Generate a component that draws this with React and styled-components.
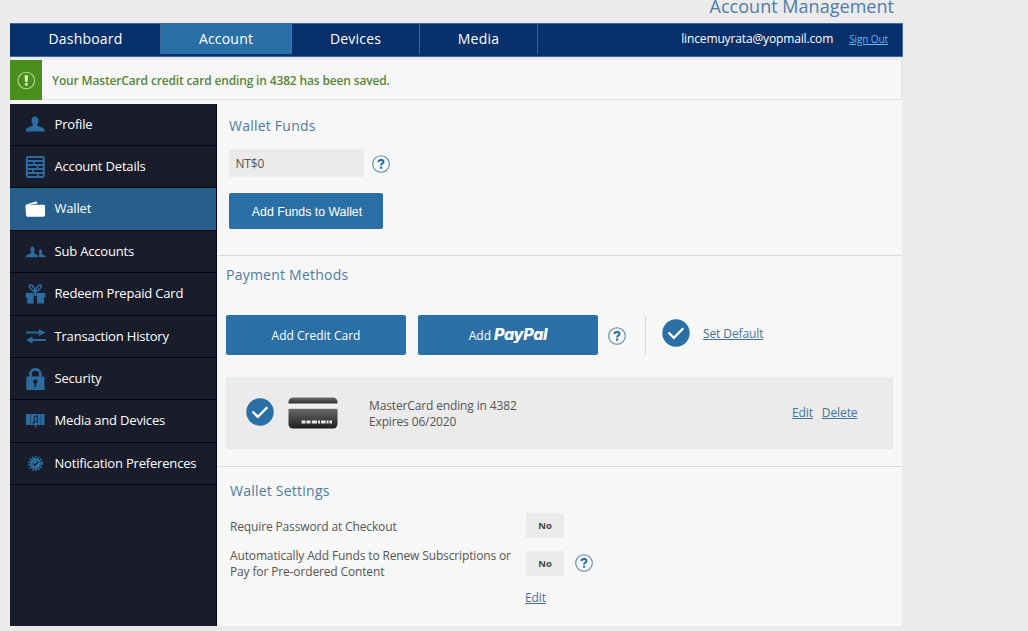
import styled, { createGlobalStyle, css } from 'styled-components';

const GlobalStyle = createGlobalStyle`
  * {
    box-sizing: border-box;
  }
  body {
    margin: 0;
    background: #ebebeb;
    font-family: 'Open Sans', 'Liberation Sans', sans-serif;
    font-size: 12px;
    color: #555;
  }
  h1, h2, p, ul {
    margin: 0;
    padding: 0;
    font-weight: 400;
  }
`;

const Page = styled.div`
  width: 1028px;
  height: 631px;
  padding-left: 10px;
  overflow: hidden;
`;

const PageTitle = styled.h1`
  width: 884px;
  height: 23px;
  line-height: 13px;
  font-size: 18px;
  letter-spacing: 0.03px;
  text-align: right;
  white-space: nowrap;
  color: #4f7ca8;
`;

const NavBar = styled.nav`
  display: flex;
  width: 893px;
  height: 34px;
  background: #08316c;
  border: 1px solid #3d6a9c;
  border-left-color: #08316c;
`;

const NavTab = styled.div`
  width: ${({ $width }) => $width}px;
  height: 30px;
  line-height: 30px;
  font-size: 14px;
  letter-spacing: 0.2px;
  text-align: center;
  color: #fff;
  border-right: 1px solid ${({ $active }) => ($active ? '#3b7cae' : '#3b6596')};
  background: ${({ $active }) => ($active ? '#2a70a6' : 'transparent')};
`;

const UserBox = styled.div`
  display: flex;
  justify-content: flex-end;
  flex: 1;
  gap: 16px;
  padding-right: 14px;
  line-height: 30px;
`;

const Email = styled.span`
  font-size: 12px;
  letter-spacing: -0.14px;
  color: #fff;
`;

const SignOut = styled.a`
  font-size: 10px;
  letter-spacing: -0.1px;
  color: #66b5f5;
  text-decoration: underline;
`;

const Body = styled.div`
  width: 892px;
  height: 566px;
  margin-top: 3px;
  background: #f7f7f7;
`;

const Banner = styled.div`
  display: flex;
  height: 40px;
  border: solid #e2e2e2;
  border-width: 0 1px 1px 0;
`;

const BannerIcon = styled.div`
  display: flex;
  align-items: center;
  justify-content: center;
  width: 32px;
  height: 40px;
  background: #4a8f1d;
`;

const BannerText = styled.p`
  margin-left: 10px;
  line-height: 41px;
  font-size: 12px;
  font-weight: 600;
  letter-spacing: -0.155px;
  color: #57853a;
`;

const Columns = styled.div`
  display: flex;
  height: 522px;
  margin-top: 4px;
`;

const SideBar = styled.ul`
  width: 207px;
  background: #181c2b;
  border-right: 1px solid #05060f;
  list-style: none;
`;

const SideItem = styled.li`
  display: flex;
  align-items: center;
  height: ${({ $height }) => $height}px;
  padding-left: 15px;
  border-bottom: 1px solid #04050e;
  font-size: 13px;
  letter-spacing: -0.18px;
  color: #fff;
  background: ${({ $active }) => ($active ? '#275f8c' : 'transparent')};

  svg {
    margin-right: 8px;
    color: ${({ $active }) => ($active ? '#fff' : '#2b6ca1')};
  }
`;

const SideLabel = styled.span`
  padding: 0 0 2px 0.5px;
`;

const Content = styled.main`
  flex: 1;
`;

const Section = styled.section`
  height: ${({ $height }) => $height}px;
  padding-top: ${({ $top }) => $top}px;
  padding-left: ${({ $left }) => $left}px;
  ${({ $last }) =>
    !$last &&
    css`
      border-bottom: 1px solid #d9dadc;
    `}
`;

const Heading = styled.h2`
  height: 20px;
  line-height: 20px;
  font-size: 14px;
  letter-spacing: 0.23px;
  color: #4f7ba3;
`;

const Row = styled.div`
  display: flex;
  align-items: center;
  margin-top: ${({ $top }) => $top || 0}px;
`;

const Amount = styled.div`
  width: 135px;
  height: 28px;
  margin-right: 8px;
  padding-left: 6.5px;
  line-height: 29px;
  font-size: 12px;
  letter-spacing: -0.2px;
  color: #555;
  background: #ebebeb;
`;

const Button = styled.button`
  display: flex;
  align-items: center;
  justify-content: center;
  width: ${({ $width }) => $width}px;
  height: ${({ $height }) => $height}px;
  padding: ${({ $plain }) => ($plain ? '1px 0 0 2px' : '0')};
  border: none;
  border-radius: 2px;
  font-family: ${({ $plain }) => ($plain ? "'Liberation Sans', Arial" : "'Open Sans'")}, sans-serif;
  font-size: ${({ $plain }) => ($plain ? 12.3 : 12)}px;
  color: #fff;
  background: #2a70a6;
`;

const PayPal = styled.span`
  margin: -3px 0 0 3px;
  font-family: Inter, 'Open Sans', sans-serif;
  font-size: 16px;
  font-style: italic;
  font-weight: 800;
  letter-spacing: -0.3px;
  line-height: 20px;
`;

const Slot = styled.span`
  display: flex;
  margin: ${({ $top }) => $top || 0}px 0 0 ${({ $left }) => $left || 0}px;
`;

const Divider = styled.div`
  width: 1px;
  height: 38px;
  margin: 0 16px 0 19px;
  background: #d5d5d7;
`;

const Link = styled.a`
  font-size: 12px;
  letter-spacing: -0.1px;
  line-height: 16px;
  color: #45739c;
  text-decoration: underline;
`;

const Card = styled.div`
  display: flex;
  align-items: center;
  width: 667px;
  height: 72px;
  margin-top: 22px;
  padding: 0 34.5px 2px 20px;
  background: #ebebeb;
  border: 1px solid #e8e8e8;
  border-width: 0 1px 1px 0;
`;

const CardText = styled.p`
  margin: 4px 0 0 31px;
  flex: 1;
  line-height: 16px;
  letter-spacing: -0.14px;
`;

const CardLinks = styled.div`
  display: flex;
  gap: 9px;
  margin-top: 2px;
`;

const SettingLabel = styled.p`
  width: 296px;
  padding-top: 2px;
  line-height: 16px;
  white-space: pre-line;
  letter-spacing: -0.14px;
`;

const SettingValue = styled.div`
  width: 38px;
  height: 25px;
  line-height: 25px;
  font-size: 9.5px;
  font-weight: 700;
  text-align: center;
  color: #444;
  background: #ebebeb;
`;

const HelpIcon = () => (
  <svg width="18" height="18" viewBox="0 0 18 18" fill="none">
    <circle cx="9" cy="9" r="8.3" stroke="#5a8aa8" strokeWidth="1.1" />
    <path d="M6.5 7C6.5 4.3 11.5 4.2 11.5 6.9C11.5 8.5 9.1 8.5 9.1 10.5" stroke="#2a70a6" strokeWidth="2.1" />
    <path d="M8 11.6H10.2V13.7H8Z" fill="#2a70a6" />
  </svg>
);

const CheckIcon = () => (
  <svg width="28" height="28" viewBox="0 0 28 28" fill="none">
    <circle cx="14" cy="14" r="13.7" fill="#2a70a6" />
    <path d="M6.5 13.5L11.8 18.8L21.3 9.3" stroke="#fff" strokeWidth="2.3" />
  </svg>
);

const AlertIcon = () => (
  <svg width="20" height="20" viewBox="0 0 20 20" fill="none">
    <circle cx="10.3" cy="10.5" r="8.3" stroke="#b3dc93" strokeWidth="1.1" />
    <path d="M8.6 5.3H12L11.6 12H9Z" fill="#d9f0c4" />
    <rect x="8.9" y="13" width="2.8" height="2.5" fill="#d9f0c4" />
  </svg>
);

const CardIcon = () => (
  <svg width="50" height="32" viewBox="0 0 50 32">
    <defs>
      <linearGradient id="card" x1="0" y1="0" x2="0" y2="1">
        <stop offset="0" stopColor="#6d6d6d" />
        <stop offset="0.2" stopColor="#2c2c2c" />
        <stop offset="0.36" stopColor="#6a6a6a" />
        <stop offset="1" stopColor="#1e1e1e" />
      </linearGradient>
    </defs>
    <rect x="0.5" y="0.5" width="49" height="31" rx="4.5" fill="url(#card)" />
    <rect y="6.5" width="50" height="5.3" fill="#f1f1f1" />
    <path d="M13.5 25H17.5M18.5 25H22.5M23.8 25H29M30 25H32M33 25H37.5M38.5 25H40.5M41.5 25H44" stroke="#e6e6e6" strokeWidth="3" />
  </svg>
);

const icons = {
  profile: (
    <path d="M10 2.5C12.4 2.5 13.5 4.2 13.5 6.4C13.5 8.6 12.6 9.8 11.9 10.8C12.2 12.6 17.8 12.8 19.7 15.5V17.5H1V15.5C2.2 12.8 7.8 12.6 8.1 10.8C7.4 9.8 6.5 8.6 6.5 6.4C6.5 4.2 7.6 2.5 10 2.5Z" fill="currentColor" />
  ),
  details: (
    <g fill="none" stroke="currentColor">
      <rect x="1.8" y="1" width="17" height="20" rx="1.5" strokeWidth="2" />
      <path d="M2 5H19M2 9H19M2 13H19M2 17H19" strokeWidth="2" />
      <path d="M9 5V9M12.5 9V13M8 13V17M13 17V21" strokeWidth="1.8" />
    </g>
  ),
  wallet: (
    <path d="M1.5 6.5L11.5 3.2L12.5 5.5L3.5 6.8H18.8Q20 6.8 20 8V17.3Q20 18.7 18.6 18.7H2.4Q1.2 18.7 1 17.3L0.5 7.8Z" fill="currentColor" />
  ),
  users: (
    <g fill="currentColor">
      <path d="M7.5 5.5C10 5.5 10 9.5 8.9 11.5C9 13 12.5 13.1 13 15V16.2H1V15C1.7 13.1 6 13 6.1 11.5C5 9.5 5 5.5 7.5 5.5Z" />
      <path d="M15.5 8.5C17.4 8.5 17.3 11.2 16.6 12.5C16.8 13.9 20.3 13.9 20.7 15.3V16.2H14V14.5C13.7 13.7 14.4 13.6 14.4 12.5C13.6 11.2 13.7 8.5 15.5 8.5Z" />
    </g>
  ),
  gift: (
    <g>
      <path d="M0.8 10H8.6V20.5H2.2V14.5H0.8ZM12 10H20.4V14.5H19V20.5H12ZM9 10H11.6V13H9Z" fill="currentColor" />
      <path d="M10.3 9.5C7 7 3.8 5 4.3 2.8C5.3 0.8 9.3 2.3 10.3 9.5C11.3 2.3 15.3 0.8 16.3 2.8C16.8 5 13.6 7 10.3 9.5Z" fill="none" stroke="currentColor" strokeWidth="1.5" />
    </g>
  ),
  transfer: (
    <path d="M1 5.4H14V3L20.5 6.5L14 10V7.6H1ZM21 13H7.5V10.6L1 14L7.5 17.4V15.1H21Z" fill="currentColor" />
  ),
  lock: (
    <g>
      <path d="M5.5 9V6C5.5 -0.2 15.3 -0.2 15.3 6V9" fill="none" stroke="currentColor" strokeWidth="2.7" />
      <path fillRule="evenodd" d="M2.3 8.5H18.5Q19.5 8.5 19.5 9.5V21Q19.5 22 18.5 22H2.3Q1.3 22 1.3 21V9.5Q1.3 8.5 2.3 8.5ZM10.4 11.6C7.4 11.6 7.7 15 9.4 15.6L9.5 19.1L11.3 18.3V15.6C13.2 14.8 13.2 11.6 10.4 11.6Z" fill="currentColor" />
    </g>
  ),
  media: (
    <g>
      <path d="M1 4H5.2V15H1ZM5.6 4H15.8V15H5.6ZM16.2 4H19.5V15H16.2Z" fill="currentColor" />
      <path d="M9.4 12.5V6.6L12.4 5.6V11.5" fill="none" stroke="#181c2b" strokeWidth="0.9" />
      <ellipse cx="8.7" cy="12.7" rx="1.2" ry="1" fill="#181c2b" />
      <ellipse cx="11.8" cy="11.7" rx="1.1" ry="0.9" fill="#181c2b" />
      <path d="M10.6 13V17.5" stroke="currentColor" strokeWidth="1.6" />
    </g>
  ),
  badge: (
    <g>
      <circle cx="10.5" cy="10.5" r="5.4" fill="currentColor" />
      <circle cx="10.5" cy="10.5" r="6.3" fill="none" stroke="currentColor" strokeWidth="2.8" strokeDasharray="1.5 1.33" />
      <path d="M7.9 10.5L9.8 12.3L13.2 8.5" fill="none" stroke="#181c2b" strokeWidth="1.2" />
    </g>
  ),
};

const menu = [
  { icon: 'profile', label: 'Profile', height: 42 },
  { icon: 'details', label: 'Account Details', height: 42 },
  { icon: 'wallet', label: 'Wallet', height: 43, active: true },
  { icon: 'users', label: 'Sub Accounts', height: 42 },
  { icon: 'gift', label: 'Redeem Prepaid Card', height: 43 },
  { icon: 'transfer', label: 'Transaction History', height: 42 },
  { icon: 'lock', label: 'Security', height: 42 },
  { icon: 'media', label: 'Media and Devices', height: 43 },
  { icon: 'badge', label: 'Notification Preferences', height: 42 },
];

export default function App() {
  return (
    <>
      <GlobalStyle />
      <Page>
        <PageTitle>Account Management</PageTitle>
        <NavBar>
          <NavTab $width={150}>Dashboard</NavTab>
          <NavTab $width={131} $active>Account</NavTab>
          <NavTab $width={128}>Devices</NavTab>
          <NavTab $width={118}>Media</NavTab>
          <UserBox>
            <Email>lincemuyrata@yopmail.com</Email>
            <SignOut>Sign Out</SignOut>
          </UserBox>
        </NavBar>
        <Body>
          <Banner>
            <BannerIcon>
              <AlertIcon />
            </BannerIcon>
            <BannerText>Your MasterCard credit card ending in 4382 has been saved.</BannerText>
          </Banner>
          <Columns>
            <SideBar>
              {menu.map(({ icon, label, height, active }) => (
                <SideItem key={icon} $height={height} $active={active}>
                  <svg width="21" height="22" viewBox="0 0 21 22">{icons[icon]}</svg>
                  <SideLabel>{label}</SideLabel>
                </SideItem>
              ))}
            </SideBar>
            <Content>
              <Section $height={152} $top={12} $left={12}>
                <Heading>Wallet Funds</Heading>
                <Row $top={13}>
                  <Amount>NT$0</Amount>
                  <Slot $top={1}>
                    <HelpIcon />
                  </Slot>
                </Row>
                <Row $top={16}>
                  <Button $width={154} $height={36} $plain>Add Funds to Wallet</Button>
                </Row>
              </Section>
              <Section $height={211} $top={9} $left={9}>
                <Heading>Payment Methods</Heading>
                <Row $top={30}>
                  <Button $width={180} $height={40}>Add Credit Card</Button>
                  <Slot $left={12}>
                    <Button $width={180} $height={40}>
                      Add <PayPal>PayPal</PayPal>
                    </Button>
                  </Slot>
                  <Slot $left={10} $top={1}>
                    <HelpIcon />
                  </Slot>
                  <Divider />
                  <Slot $top={-4}>
                    <CheckIcon />
                  </Slot>
                  <Slot $left={13} $top={-2}>
                    <Link>Set Default</Link>
                  </Slot>
                </Row>
                <Card>
                  <CheckIcon />
                  <Slot $left={14} $top={2}>
                    <CardIcon />
                  </Slot>
                  <CardText>
                    MasterCard ending in 4382
                    <br />
                    Expires 06/2020
                  </CardText>
                  <CardLinks>
                    <Link>Edit</Link>
                    <Link>Delete</Link>
                  </CardLinks>
                </Card>
              </Section>
              <Section $height={159} $top={14} $left={13} $last>
                <Heading>Wallet Settings</Heading>
                <Row $top={12}>
                  <SettingLabel>Require Password at Checkout</SettingLabel>
                  <SettingValue>No</SettingValue>
                </Row>
                <Row $top={8}>
                  <SettingLabel>{'Automatically Add Funds to Renew Subscriptions or\nPay for Pre-ordered Content'}</SettingLabel>
                  <SettingValue>No</SettingValue>
                  <Slot $left={11}>
                    <HelpIcon />
                  </Slot>
                </Row>
                <Row $top={10}>
                  <Slot $left={295}>
                    <Link>Edit</Link>
                  </Slot>
                </Row>
              </Section>
            </Content>
          </Columns>
        </Body>
      </Page>
    </>
  );
}
